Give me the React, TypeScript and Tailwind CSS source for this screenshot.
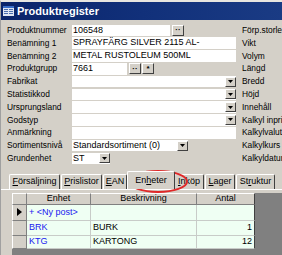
import React from 'react'

const font = { fontFamily: '"Liberation Sans", Arial, sans-serif' }

function DropBtn() {
  return (
    <div className="w-[11px] h-[10px] bg-[#d4d0c8] border-t border-l border-t-white border-l-white border-b border-r border-b-[#404040] border-r-[#404040] flex items-center justify-center">
      <svg width="5" height="3" viewBox="0 0 5 3">
        <path d="M0 0h5L2.5 3z" fill="#000" />
      </svg>
    </div>
  )
}

function SmallBtn({ label }: { label: string }) {
  return (
    <div className="w-[12px] h-[11px] bg-[#d4d0c8] border-t border-l border-t-white border-l-white border-b border-r border-b-[#404040] border-r-[#404040] flex items-center justify-center text-[8px] font-bold leading-none text-black">
      {label}
    </div>
  )
}

type Field = {
  label: string
  value?: string
  width: number
  drop?: boolean
  buttons?: string[]
}

const fields: Field[] = [
  { label: 'Produktnummer', value: '106548', width: 98, buttons: ['··'] },
  { label: 'Benämning 1', value: 'SPRAYFÄRG SILVER 2115 AL-', width: 164 },
  { label: 'Benämning 2', value: 'METAL RUSTOLEUM 500ML', width: 164 },
  { label: 'Produktgrupp', value: '7661', width: 55, buttons: ['··', '*'] },
  { label: 'Fabrikat', width: 164, drop: true },
  { label: 'Statistikkod', width: 164, drop: true },
  { label: 'Ursprungsland', width: 164, drop: true },
  { label: 'Godstyp', width: 164, drop: true },
  { label: 'Anmärkning', width: 164 },
  { label: 'Sortimentsnivå', value: 'Standardsortiment (0)', width: 116, drop: true },
  { label: 'Grundenhet', value: 'ST', width: 38, drop: true },
]

const rightLabels = [
  'Förp.storlek',
  'Vikt',
  'Volym',
  'Längd',
  'Bredd',
  'Höjd',
  'Innehåll',
  'Kalkyl inpris',
  'Kalkylvaluta',
  'Kalkylkurs',
  'Kalkyldatum',
]

const tabs = [
  { pre: '', u: 'F', post: 'örsäljning', w: 51 },
  { pre: '', u: 'P', post: 'rislistor', w: 41 },
  { pre: '', u: 'E', post: 'AN', w: 24 },
  { pre: 'En', u: 'h', post: 'eter', w: 48, active: true },
  { pre: '', u: 'I', post: 'nköp', w: 30 },
  { pre: '', u: 'L', post: 'ager', w: 30 },
  { pre: 'St', u: 'r', post: 'uktur', w: 39 },
]

const rows = [
  { enhet: '+ <Ny post>', besk: '', antal: '', h: 16, current: true },
  { enhet: 'BRK', besk: 'BURK', antal: '1', h: 15 },
  { enhet: 'KTG', besk: 'KARTONG', antal: '12', h: 13 },
]

export default function App() {
  return (
    <div
      className="relative w-[282px] h-[255px] overflow-hidden bg-[#d4d0c8] text-[9px] text-black border-t-2 border-t-[#e8e6e0] border-l border-l-[#a0a0a0]"
      style={font}
    >
      {/* title bar */}
      <div className="h-[18px] flex items-center gap-[3px] pl-[2px] bg-gradient-to-r from-[#0a246a] via-[#11307a] to-[#1a3b84]">
        <svg width="11" height="10" viewBox="0 0 11 10">
          <rect x="0" y="0" width="11" height="10" fill="#dfe6f3" />
          <rect x="0" y="0" width="11" height="2" fill="#3a6ec8" />
          <rect x="1" y="3" width="4" height="1" fill="#4b6fb0" />
          <rect x="6" y="3" width="4" height="1" fill="#4b6fb0" />
          <rect x="1" y="5" width="4" height="1" fill="#4b6fb0" />
          <rect x="6" y="5" width="4" height="1" fill="#4b6fb0" />
          <rect x="1" y="7" width="4" height="1" fill="#4b6fb0" />
          <rect x="6" y="7" width="4" height="1" fill="#4b6fb0" />
        </svg>
        <span className="text-white font-bold text-[11px] leading-none">Produktregister</span>
      </div>

      {/* form */}
      <div className="flex pt-[4px]">
        <div className="w-[241px] shrink-0 pl-[6px] flex flex-col">
          {fields.map((f) => (
            <div key={f.label} className="flex items-center h-[12.8px]">
              <span className="w-[65px] shrink-0 whitespace-nowrap text-[8.4px]">{f.label}</span>
              <div
                className="h-[11.5px] shrink-0 bg-white flex items-center justify-between pl-[1px]"
                style={{ width: f.width }}
              >
                <span className="whitespace-nowrap overflow-hidden">{f.value}</span>
                {f.drop && <DropBtn />}
              </div>
              {f.buttons && (
                <div className="flex gap-[1px] ml-[2px]">
                  {f.buttons.map((b, i) => (
                    <SmallBtn key={i} label={b} />
                  ))}
                </div>
              )}
            </div>
          ))}
        </div>
        <div className="flex flex-col shrink-0 text-[8.4px]">
          {rightLabels.map((l) => (
            <div key={l} className="h-[12.8px] flex items-center whitespace-nowrap">
              {l}
            </div>
          ))}
        </div>
      </div>

      {/* tabs */}
      <div className="relative mt-[6px] flex items-end pl-[8px] h-[18px]">
        {tabs.map((t, i) => (
          <div
            key={i}
            className={`flex items-center justify-center bg-[#d4d0c8] border-t border-l border-t-white border-l-white border-r border-r-[#404040] rounded-t-[2px] ${
              t.active ? 'h-[18px] -mx-[1px] z-10 relative' : 'h-[15px] mr-[1px]'
            }`}
            style={{ width: t.w }}
          >
            <span className="whitespace-nowrap">
              {t.pre}
              <span className="underline">{t.u}</span>
              {t.post}
            </span>
          </div>
        ))}
      </div>

      {/* panel */}
      <div className="border-t border-t-white flex pl-[11px] pt-[3px] h-[67px]">
        <div className="flex-1 bg-[#808080] flex flex-col">
          {/* header */}
          <div className="flex h-[12px] w-[243px]">
            <div className="w-[15px] bg-[#d4d0c8] border-t border-l border-t-white border-l-white border-r border-b border-r-[#808080] border-b-[#808080]" />
            <div className="w-[64px] bg-[#d4d0c8] border-t border-t-white border-r border-b border-r-[#808080] border-b-[#808080] flex items-center justify-center">
              Enhet
            </div>
            <div className="w-[106px] bg-[#d4d0c8] border-t border-t-white border-r border-b border-r-[#808080] border-b-[#808080] flex items-center justify-center">
              Beskrivning
            </div>
            <div className="w-[58px] bg-[#d4d0c8] border-t border-t-white border-r border-b border-r-[#404040] border-b-[#808080] flex items-center justify-center">
              Antal
            </div>
          </div>
          {rows.map((r, i) => (
            <div key={i} className="flex w-[243px]" style={{ height: r.h }}>
              <div className="w-[15px] bg-[#d4d0c8] border-l border-l-white border-r border-b border-r-[#808080] border-b-[#808080] flex items-center justify-center">
                {r.current && (
                  <svg width="5" height="8" viewBox="0 0 5 8">
                    <path d="M0 0l5 4-5 4z" fill="#000" />
                  </svg>
                )}
              </div>
              <div className="w-[64px] bg-[#effff3] border-r border-b border-[#c8ccc8] flex items-center pl-[2px] text-[#2020f0] whitespace-nowrap">
                {r.enhet}
              </div>
              <div className="w-[106px] bg-[#effff3] border-r border-b border-[#c8ccc8] flex items-center pl-[2px]">
                {r.besk}
              </div>
              <div className="w-[58px] bg-[#effff3] border-r border-b border-r-[#404040] border-b-[#c8ccc8] flex items-center justify-end pr-[2px]">
                {r.antal}
              </div>
            </div>
          ))}
        </div>
      </div>

      {/* highlight ellipse */}
      <svg className="absolute left-0 top-0 pointer-events-none" width="282" height="255">
        <ellipse cx="157" cy="179.5" rx="29" ry="10.5" fill="none" stroke="#e02828" strokeWidth="2" />
      </svg>
    </div>
  )
}
